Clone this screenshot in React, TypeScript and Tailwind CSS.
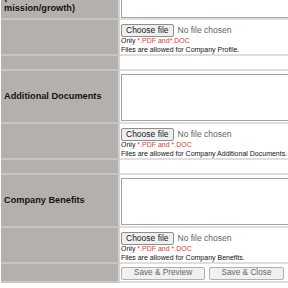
import React from 'react';

const FONT = "font-['Liberation_Sans',Arial,sans-serif]";

const Label: React.FC<{ h: string; extra?: string; children?: React.ReactNode }> = ({ h, extra, children }) => (
  <div className={`${h} ${extra ?? 'items-center'} w-[119px] shrink-0 ml-px bg-[#b3b0ae] border-b-2 border-b-[#c8c5c3] border-r-2 border-r-[#d3d1cf] flex pl-[3px] text-[9.2px] leading-[11px] font-bold text-[#141414]`}>
    {children}
  </div>
);

const TextRow: React.FC<{ label: React.ReactNode; first?: boolean }> = ({ label, first }) => (
  <div className="flex">
    <Label h={first ? 'h-[45px]' : 'h-[53px]'} extra={first ? 'items-end pb-[4px]' : undefined}>{label}</Label>
    <div className={`${first ? 'h-[45px]' : 'h-[53px]'} w-[200px] border-b-2 border-[#dedede] pl-px pt-[3px]`}>
      <textarea
        readOnly
        className={`${first ? 'h-[40px]' : 'h-[47px]'} w-[190px] resize-none bg-white border border-[#a3a3a3] block outline-none`}
      />
    </div>
  </div>
);

const FileRow: React.FC<{ name: string; tight?: boolean }> = ({ name, tight }) => (
  <div className="flex">
    <Label h="h-[36px]" />
    <div className="h-[36px] w-[200px] border-b-2 border-[#dedede] pl-px pt-[4px]">
      <div className="flex items-center h-[13px]">
        <span className="h-[13px] px-[4px] flex items-center bg-[#efefef] border border-[#8e8e8e] rounded-[2px] text-[8.5px] text-[#1a1a1a]">
          Choose file
        </span>
        <span className="ml-[4px] text-[8.5px] text-[#5f5f5f]">No file chosen</span>
      </div>
      <div className="text-[7px] leading-[8.5px] text-[#111] whitespace-nowrap">
        Only <span className="text-[#e23b36]">{tight ? '*.PDF and*.DOC' : '*.PDF and *.DOC'}</span>
      </div>
      <div className="text-[7px] leading-[8.5px] text-[#111] whitespace-nowrap">
        Files are allowed for {name}.
      </div>
    </div>
  </div>
);

const Spacer: React.FC = () => (
  <div className="flex">
    <Label h="h-[15px]" />
    <div className="h-[15px] w-[200px] border-b-2 border-[#dedede]" />
  </div>
);

export default function App() {
  return (
    <div className={`w-[288px] h-[288px] overflow-hidden bg-white ${FONT}`}>
      <div className="-mt-[25px]">
        <TextRow
          first
          label={
            <span>
              Company Profile
              <br />
              (vision/
              <br />
              mission/growth)
            </span>
          }
        />
        <FileRow name="Company Profile" tight />
        <Spacer />
        <TextRow label="Additional Documents" />
        <FileRow name="Company Additional Documents" />
        <Spacer />
        <TextRow label="Company Benefits" />
        <FileRow name="Company Benefits" />
        <div className="flex">
          <Label h="h-[19px]" />
          <div className="h-[19px] w-[200px] border-b-2 border-[#dedede] pl-px pt-[3px] flex gap-[4px]">
            <span className="h-[13px] w-[84px] flex items-center justify-center bg-[#f0f0f0] border border-[#b0b0b0] rounded-[2px] text-[8.25px] text-[#666]">
              Save &amp; Preview
            </span>
            <span className="h-[13px] w-[75px] flex items-center justify-center bg-[#f0f0f0] border border-[#b0b0b0] rounded-[2px] text-[8.25px] text-[#666]">
              Save &amp; Close
            </span>
          </div>
        </div>
      </div>
    </div>
  );
}
